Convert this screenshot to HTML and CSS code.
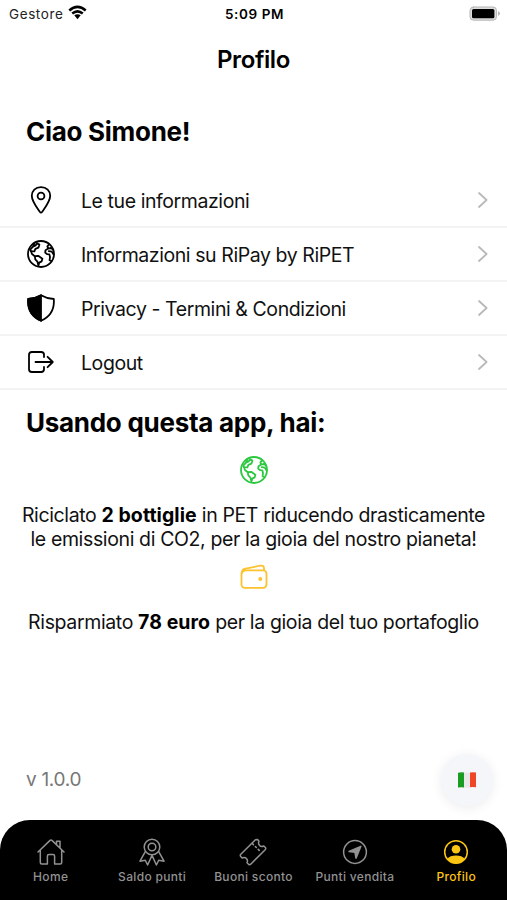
FILE: index.html
```html
<!DOCTYPE html>
<html lang="it">
<head>
<meta charset="utf-8">
<meta name="viewport" content="width=device-width, initial-scale=1">
<title>Profilo</title>
<link rel="stylesheet" href="styles.css">
</head>
<body>
<svg class="defs" aria-hidden="true">
  <symbol id="globe" viewBox="0 0 28 28">
    <circle cx="14" cy="14" r="13"/>
    <path d="M7.2 3.6L6 6.6L3.2 9.6L4 11.2L7.4 11.4L8.4 8.8L11.4 7.6L12.4 4.6L10.2 3.4L8.6 5.4L6 6.6"/>
    <path d="M7.8 16.2L11.2 15.8L15.4 18.8L14.6 21.4L12.3 22.6L11.4 25.4L10.4 21.6L8.3 19.4ZM4 11.2L5 14L7.8 16.2"/>
    <path d="M22 4.4L20.4 6.4L21.2 8.6L18.5 10.2L18.2 12.6L20.2 14.2L22.4 14.4L23 17L22.6 20.2L24 20.8M21.2 8.6L24 8L26 9.6M21.8 11.2L24.8 11.6L26.6 14.6"/>
  </symbol>
  <symbol id="chevron" viewBox="0 0 12 18"><path d="M2 2L9.6 9L2 16"/></symbol>
</svg>
<div class="screen">
  <div class="status">
    <div class="carrier"><span>Gestore</span>
      <svg class="wifi" viewBox="0 0 18 14"><path d="M1.2 5.1Q9-1.7 16.8 5.1M4 8Q9 3.8 14 8"/><path class="dot" d="M6 9.7Q9 7.5 12 9.7L9 13.3Z"/></svg>
    </div>
    <div class="time">5:09 PM</div>
    <div class="power"><svg class="battery" viewBox="0 0 32 16"><rect class="shell" x="1" y="1" width="26.5" height="13.2" rx="3.5"/><rect x="3" y="3" width="22.4" height="9.3" rx="1.5"/><path class="tip" d="M29 5Q33 7.6 29 10Z"/></svg></div>
  </div>
  <h1 class="title">Profilo</h1>
  <h2 class="heading hello">Ciao Simone!</h2>
  <ul class="menu">
    <li class="row"><svg class="icon" viewBox="0 0 28 28"><path d="M14 1.1C8.4 1.1 4.8 5 4.8 9.8C4.8 15.5 10.4 22.2 12.8 25.8Q14 27.5 15.2 25.8C17.6 22.2 23.2 15.5 23.2 9.8C23.2 5 19.6 1.1 14 1.1Z"/><circle cx="14" cy="10" r="3.4"/></svg><span class="label">Le tue informazioni</span><svg class="chev"><use href="#chevron"/></svg></li>
    <li class="row"><svg class="icon"><use href="#globe"/></svg><span class="label">Informazioni su RiPay by RiPET</span><svg class="chev"><use href="#chevron"/></svg></li>
    <li class="row"><svg class="icon" viewBox="0 0 28 28"><path d="M14 1.2Q8 4.7 1.2 5C.4 15 4.5 22.5 14 26.8C23.5 22.5 27.6 15 26.8 5Q20 4.7 14 1.2Z"/><path class="fill" d="M14 1.2Q8 4.7 1.2 5C.4 15 4.5 22.5 14 26.8Z"/></svg><span class="label">Privacy - Termini &amp; Condizioni</span><svg class="chev"><use href="#chevron"/></svg></li>
    <li class="row"><svg class="icon" viewBox="0 0 28 28"><path d="M17 9V6.8Q17 4 14.2 4H4.8Q2 4 2 6.8V21.3Q2 24 4.8 24H14.2Q17 24 17 21.3V19M8.5 14H25.8M20.6 8.8L25.8 14L20.6 19.2"/></svg><span class="label">Logout</span><svg class="chev"><use href="#chevron"/></svg></li>
  </ul>
  <h2 class="heading using">Usando questa app, hai:</h2>
  <svg class="stat green"><use href="#globe"/></svg>
  <p class="text">Riciclato <b>2 bottiglie</b> in PET riducendo drasticamente<br>le emissioni di CO2, per la gioia del nostro pianeta!</p>
  <svg class="stat yellow" viewBox="0 0 28 28"><rect x="1.5" y="7.3" width="25" height="17.5" rx="3.3"/><path d="M2 9.5Q2 6.2 5.5 5.6L20.5 2.7Q24 2 24 5.5V7.3M2 10Q2.5 7.3 5 7.3"/><circle class="dot" cx="20.3" cy="16" r="1.9"/></svg>
  <p class="text">Risparmiato <b>78 euro</b> per la gioia del tuo portafoglio</p>
  <div class="foot"><span class="version">v 1.0.0</span>
    <div class="lang"><svg class="flag" viewBox="0 0 18 16"><path fill="#189c22" d="M0 .7Q3 0 6 .4V15.4Q3 15 0 15.6Z"/><path fill="#e8e8e8" d="M6 .4Q9 1 12 .6V15.2Q9 16 6 15.4Z"/><path fill="#f04628" d="M12 .6Q15 0 18 .5V15.3Q15 15 12 15.2Z"/></svg></div>
  </div>
  <nav class="tabs">
    <div class="tab"><svg class="ti" viewBox="0 0 28 28"><path d="M1 14L12.8 2.6Q14 1.5 15.2 2.6L27 14M3.3 12V24.5Q3.3 26 4.8 26H10.4V18Q10.4 16.5 12 16.5H16Q17.6 16.5 17.6 18V26H23.2Q24.7 26 24.7 24.5V12M19.5 6.4V3.2H23V10"/></svg><span>Home</span></div>
    <div class="tab"><svg class="ti" viewBox="0 0 28 28"><circle cx="14" cy="9" r="7.8"/><circle cx="14" cy="9" r="3.8"/><path d="M7.3 13.6L2 23.2L7.3 22.2L9.6 27L14 17.4L18.4 27L20.7 22.2L26 23.2L20.7 13.6"/></svg><span>Saldo punti</span></div>
    <div class="tab"><svg class="ti" viewBox="0 0 28 28"><path d="M16.4 1.8L18.6 1.6L20 3.2Q18.8 5.7 20.6 7.4Q22.3 9.2 24.8 8L26.6 9.8Q27 10.7 26.2 11.7L11.7 26.2Q10.7 27 9.8 26.5L8 24.8Q9.2 22.3 7.4 20.6Q5.7 18.8 3.2 20L1.5 18.2Q1 17.3 1.8 16.3Z"/><path d="M13.4 5.6L14.4 6.6M16.3 8.5L17.3 9.5M19.2 11.4L20.2 12.4"/></svg><span>Buoni sconto</span></div>
    <div class="tab"><svg class="ti" viewBox="0 0 28 28"><circle cx="14" cy="14" r="11.4"/><path class="fill" d="M19.8 8.4L15 20.2L13.9 14.2L8 13.4Z"/></svg><span>Punti vendita</span></div>
    <div class="tab active"><svg class="ti" viewBox="0 0 28 28"><circle cx="14" cy="14" r="11.3"/><circle class="dot" cx="14" cy="11.2" r="4.3"/><path class="dot" d="M5.2 21Q8 17.6 14 17.6Q20 17.6 22.8 21Q19.5 25.6 14 25.6Q8.5 25.6 5.2 21Z"/></svg><span>Profilo</span></div>
  </nav>
</div>
</body>
</html>
```
FILE: styles.css
```css
* { box-sizing: border-box; margin: 0; padding: 0; }
body { background: #fff; color: #111; font-family: Inter, "Liberation Sans", sans-serif; }
.defs { position: absolute; width: 0; height: 0; }
.screen { width: 507px; height: 900px; display: flex; flex-direction: column; overflow: hidden; }
svg { display: block; fill: none; stroke: currentColor; stroke-width: 1.8; stroke-linecap: round; stroke-linejoin: round; flex-shrink: 0; }
.dot { fill: currentColor; stroke: none; }
.fill { fill: currentColor; }
.status { height: 28px; display: grid; grid-template-columns: 1fr auto 1fr; align-items: center; padding: 0 6px 0 9px; font-size: 13.5px; }
.carrier { display: flex; align-items: center; gap: 5px; letter-spacing: .6px; color: #222; }
.wifi { width: 19px; height: 15px; stroke-width: 2.4; stroke-linecap: butt; color: #000; margin-top: -3px; }
.time { font-weight: 600; color: #000; letter-spacing: .6px; margin-left: -1px; }
.power { display: flex; justify-content: flex-end; }
.battery { width: 32px; height: 16px; stroke: none; fill: #000; margin-top: -1px; }
.battery .shell { fill: #ddd; stroke: #b5b5b5; stroke-width: 1; }
.battery .tip { fill: #b5b5b5; }
.title { height: 62px; line-height: 64px; text-align: center; font-size: 24px; font-weight: 600; color: #000; letter-spacing: -.4px; }
.heading { padding-left: 26px; font-size: 26px; line-height: 32px; font-weight: 700; color: #000; letter-spacing: -.28px; }
.hello { margin-top: 26px; }
.menu { list-style: none; margin-top: 26px; }
.row { height: 54.1px; display: flex; align-items: center; padding: 0 18px 0 27px; border-bottom: 2px solid #f3f3f3; }
.icon { width: 28px; height: 28px; color: #000; }
.label { flex: 1; margin-left: 26px; padding-top: 1px; font-size: 19.5px; letter-spacing: -.42px; }
.chev { width: 12px; height: 18px; color: #b9b9b9; }
.using { margin-top: 16.4px; }
.stat { width: 28px; height: 28px; align-self: center; }
.green { color: #2cc840; margin-top: 17px; }
.yellow { color: #fdc22d; margin-top: 11px; }
.text { text-align: center; font-size: 19.5px; line-height: 24.5px; letter-spacing: -.37px; white-space: nowrap; }
.green + .text { margin-top: 19px; }
.yellow + .text { margin-top: 19px; }
.text b { font-weight: 700; color: #000; letter-spacing: .06px; }
.foot { margin-top: auto; height: 81px; padding: 0 14px 0 26px; display: flex; justify-content: space-between; align-items: flex-start; }
.version { font-size: 19px; line-height: 24px; margin-top: 29px; color: #777; letter-spacing: -.3px; }
.lang { width: 52px; height: 52px; border-radius: 50%; background: #f4f6fa; box-shadow: 0 2px 12px rgba(0,0,0,.08); display: flex; align-items: center; justify-content: center; margin-top: 15px; }
.flag { width: 18px; height: 16px; stroke: none; }
.tabs { height: 80px; background: #000; border-radius: 30px 30px 0 0; display: grid; grid-template-columns: repeat(5, 1fr); color: #929292; }
.tab { display: flex; flex-direction: column; align-items: center; padding-top: 18.4px; font-size: 12px; line-height: 16px; letter-spacing: .32px; font-weight: 500; gap: 3px; white-space: nowrap; }
.ti { width: 28px; height: 28px; stroke-width: 1.5; }
.active { color: #fdc513; }
```
